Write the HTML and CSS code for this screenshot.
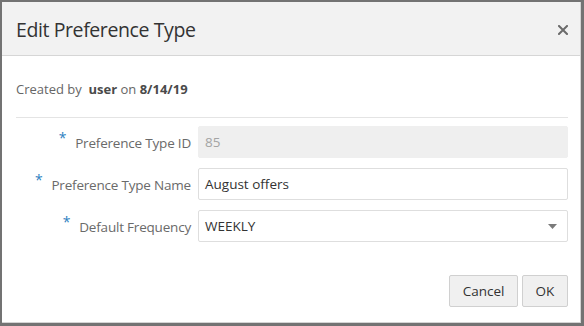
FILE: index.html
```html
<!DOCTYPE html>
<html>
<head>
<meta charset="utf-8">
<link rel="stylesheet" href="styles.css">
</head>
<body>
<div class="frame">
  <div class="dialog">
    <div class="header">
      <div class="title">Edit Preference Type</div>
      <svg class="close" width="10" height="10" viewBox="0 0 10 10"><path d="M1 1 L9 9 M9 1 L1 9" stroke="#6b6b6b" stroke-width="2" stroke-linecap="square"/></svg>
    </div>
    <div class="body">
      <div class="created">Created by&nbsp; <b>user</b> on <b>8/14/19</b></div>
      <div class="sep"></div>
      <div class="form">
        <div class="row">
          <div class="label"><span class="req">*</span>Preference Type ID</div>
          <div class="field disabled">85</div>
        </div>
        <div class="row">
          <div class="label"><span class="req">*</span>Preference Type Name</div>
          <div class="field">August offers</div>
        </div>
        <div class="row">
          <div class="label"><span class="req">*</span>Default Frequency</div>
          <div class="field select">WEEKLY<svg class="arrow" width="9" height="5" viewBox="0 0 9 5"><path d="M0 0 H9 L4.5 5 Z" fill="#7a7a7a"/></svg></div>
        </div>
      </div>
    </div>
    <div class="footer">
      <button class="btn cancel">Cancel</button>
      <button class="btn ok">OK</button>
    </div>
  </div>
</div>
</body>
</html>
```
FILE: styles.css
```css
html, body { margin: 0; padding: 0; }
body { width: 584px; height: 326px; overflow: hidden; font-family: "Open Sans", "Noto Sans", sans-serif; color: #333; background: #fff; }
.frame { box-sizing: border-box; width: 584px; height: 326px; border: 2px solid #737373; border-right-width: 3px; border-bottom-width: 3px; }
.dialog { box-sizing: border-box; height: 100%; border-right: 1px solid #d4d4d4; border-bottom: 1px solid #d4d4d4; display: flex; flex-direction: column; background: #fff; }
.header { height: 53px; background: #f2f2f2; border-bottom: 1px solid #d6d6d6; display: flex; align-items: center; justify-content: space-between; padding: 0 12px 0 14px; }
.title { font-size: 19.5px; color: #333; letter-spacing: -0.4px; padding-top: 2px; }
.close { margin-top: 2px; }
.body { padding: 0 12px 0 14px; }
.created { font-size: 13px; color: #666; margin-top: 24px; height: 18px; line-height: 18px; }
.created b { color: #4a4a4a; font-weight: 700; }
.sep { height: 1px; background: #e4e4e4; margin-top: 19px; }
.form { margin-top: 8px; display: flex; flex-direction: column; gap: 10px; }
.row { display: flex; align-items: center; }
.label { box-sizing: border-box; width: 182px; flex: none; padding-right: 7px; text-align: right; font-size: 13.5px; letter-spacing: -0.2px; color: #6a6a6a; white-space: nowrap; }
.req { color: #2e7fc1; font-size: 14px; position: relative; top: -5px; margin-right: 9px; }
.field { box-sizing: border-box; flex: 1; height: 32px; border: 1px solid #dedede; border-radius: 2px; padding: 0 6px; font-size: 13.5px; color: #333; display: flex; align-items: center; }
.field.disabled { background: #efefef; border-color: #efefef; color: #a4a4a4; }
.field.select { justify-content: space-between; padding-right: 10px; }
.footer { margin-top: auto; display: flex; justify-content: flex-end; gap: 4px; padding: 0 12px 15px 0; }
.btn { box-sizing: border-box; height: 32px; border: 1px solid #d0d0d0; border-radius: 2px; background: #f0f0f0; font-family: inherit; font-size: 13.5px; color: #333; padding: 0 12px; }
.cancel { width: 69px; }
.ok { width: 46px; }
```
